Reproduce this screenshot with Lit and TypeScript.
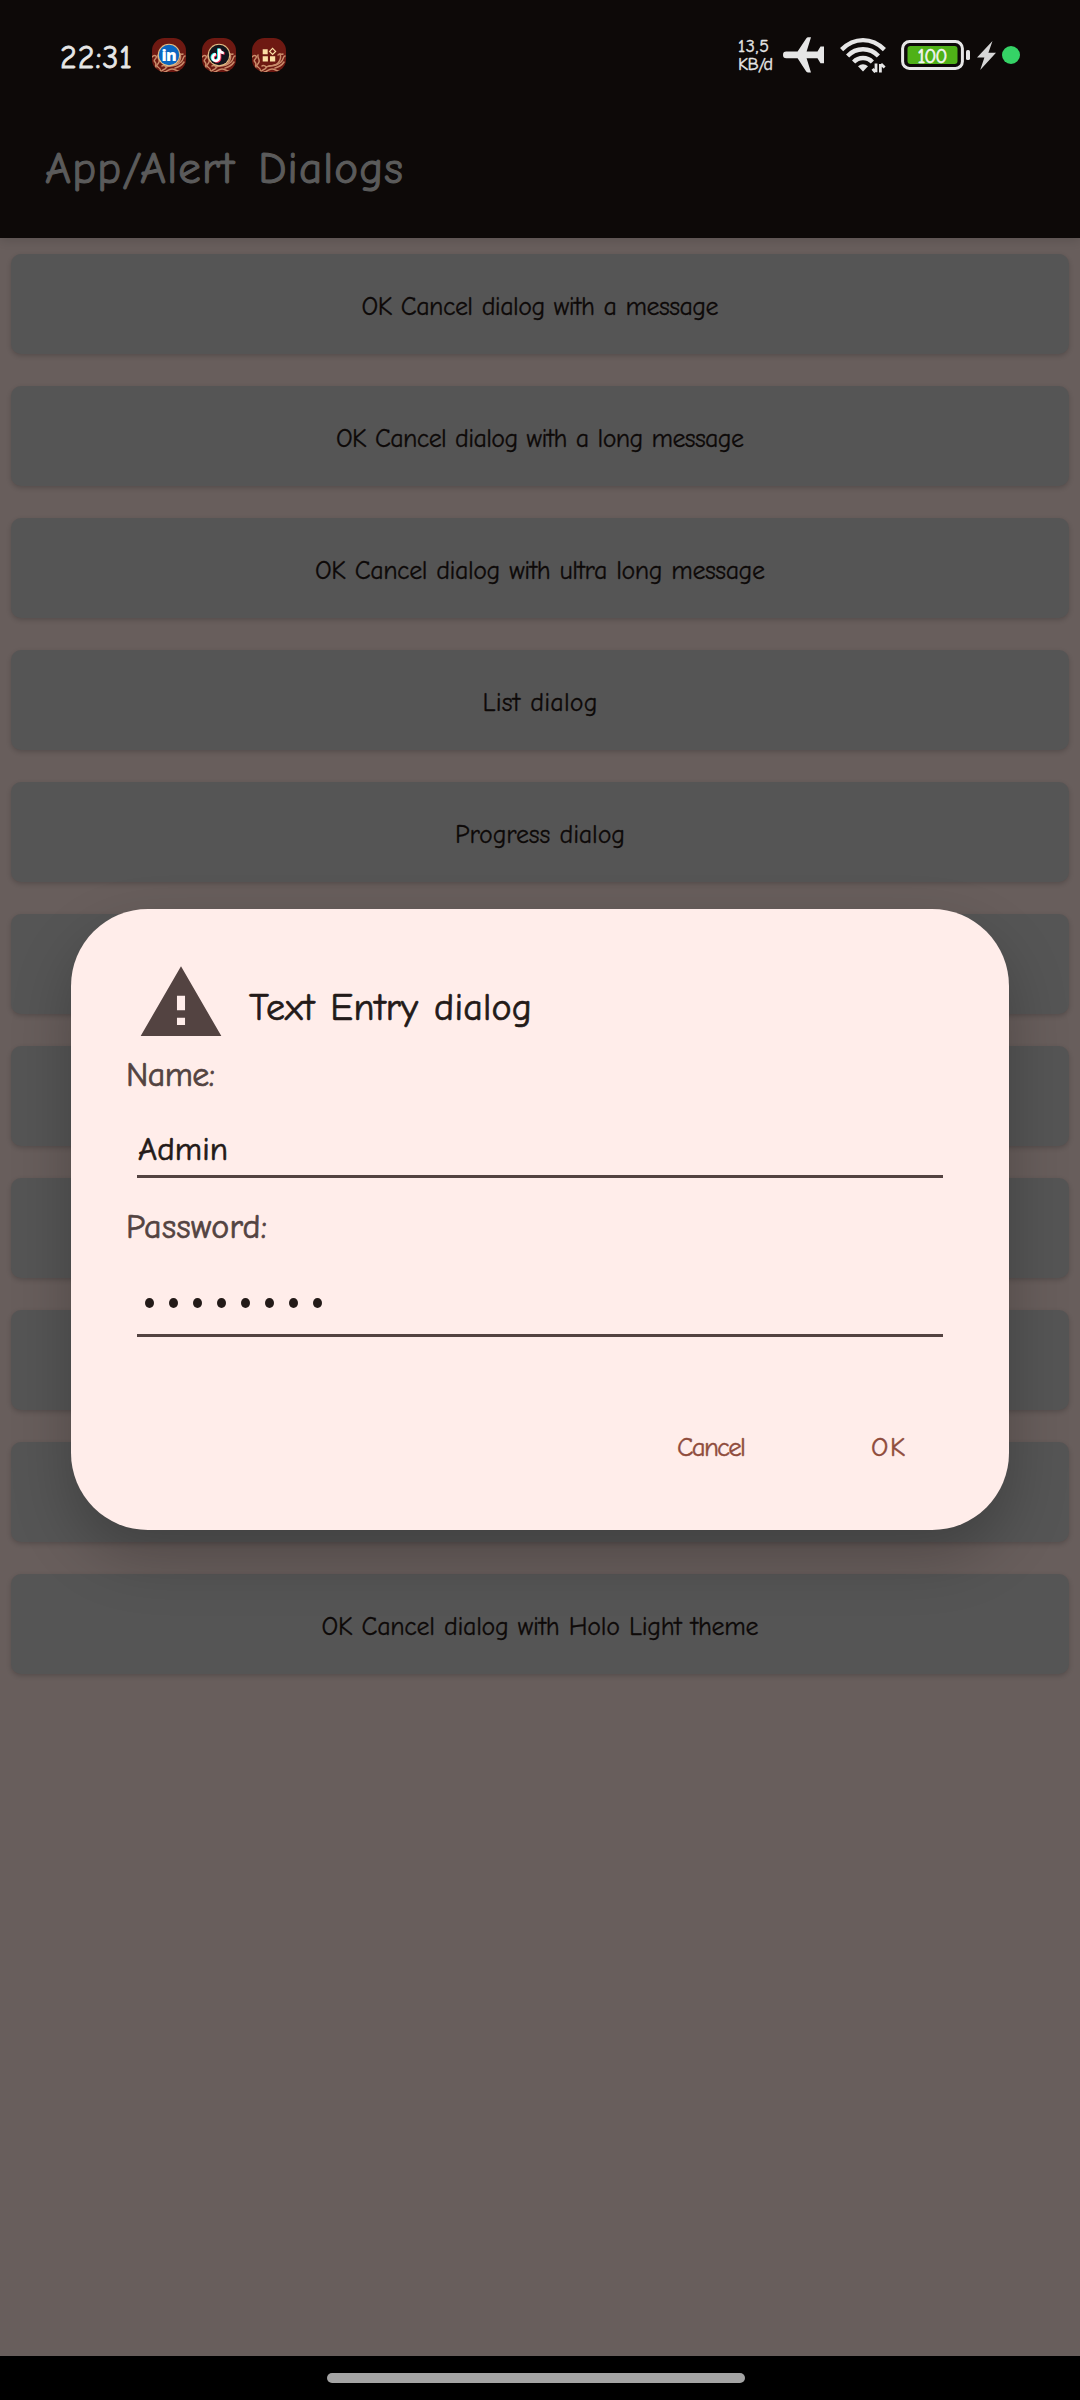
import { LitElement, html, svg, css } from "lit";
import { customElement, property } from "lit/decorators.js";

/** One line of text whose tracking is adjusted so that it spans a given width. */
@customElement("fit-text")
class FitText extends LitElement {
  @property({ type: Number }) span = 100;
  @property() text = "";

  static styles = css`
    :host { display: block; white-space: pre; flex: none; }
    .line { display: inline-block; }
  `;

  async firstUpdated() {
    await document.fonts.ready;
    const line = this.renderRoot.querySelector(".line") as HTMLElement;
    const natural = line.getBoundingClientRect().width;
    const count = this.text.length - 1;
    const spacing = (this.span - natural) / count;
    line.style.letterSpacing = `${spacing}px`;
    line.style.marginRight = `${-spacing}px`;
  }

  render() {
    return html`<span class="line">${this.text}</span>`;
  }
}

const tile = (id: string, badge: unknown) => html`
  <svg class="tile" viewBox="0 0 34 34">
    <defs><clipPath id=${id}><rect width="34" height="34" rx="12.5"></rect></clipPath></defs>
    <g clip-path="url(#${id})">
      <rect width="34" height="34" fill="#6e1912"></rect>
      <g fill="none" stroke="#c98c6b" stroke-width="1.5" stroke-linecap="round">
        <path d="M0 19c3-3 5-1 4 1s-3 2-1 4 0 3 1 5"></path>
        <path d="M6 17c-1 3 2 4 1 7s-4 3-1 5 3 3 2 5"></path>
        <path d="M9 34c1-3 4-2 5-4s-3-3-4-2M12 34c3 0 4-3 8-3s4 3 8 2"></path>
        <path d="M14 29c5-2 9-1 12-4s3-7 2-9"></path>
        <path d="M17 28c4 0 9-1 12-4s2-6 4-6"></path>
        <path d="M23 30c4-1 7-3 9-6M26 17c2-2 3 0 5-1"></path>
      </g>
      ${badge}
    </g>
  </svg>
`;

const linkedIn = svg`
  <circle cx="17" cy="17" r="11.2" fill="#e3bd86"/>
  <circle cx="17" cy="17" r="10.2" fill="#0a66c2"/>
  <text x="16.8" y="22.8" text-anchor="middle" font-family="'Open Sans', sans-serif" font-weight="800" font-size="16" letter-spacing="-0.6" fill="#fff">in</text>
`;

const notePath = "M17.2 10.8v8.8a3.3 3.3 0 1 1-3.3-3.3M17.2 10.8c.4 2.6 2.2 4 4.6 4.1";
const tikTok = svg`
  <circle cx="17" cy="17" r="11.2" fill="#e3bd86"/>
  <circle cx="17" cy="17" r="10.2" fill="#14141c"/>
  <g fill="none" stroke-width="2.5">
    <path d=${notePath} stroke="#25f4ee" transform="translate(-0.9 -0.4)"/>
    <path d=${notePath} stroke="#fe2c55" transform="translate(0.9 0.6)"/>
    <path d=${notePath} stroke="#fff"/>
  </g>
`;

const widgets = svg`
  <path d="M9 21h16v4l-6 2h-6z" fill="#6e1912"/>
  <path d="M10.7 11.3h5v5h-5zM10.7 18.3h5.2v5.3h-5.2zM18 18.3h5.2v5.3H18z" fill="#fbdfa5"/>
  <path d="M20.6 10.4l3 3-3 3-3-3z" fill="#6e1912" stroke="#fbdfa5" stroke-width="1.2"/>
`;

@customElement("status-bar")
class StatusBar extends LitElement {
  static styles = css`
    :host {
      display: flex; justify-content: space-between; align-items: center;
      height: 110px; padding: 0 60px 0 60px; box-sizing: border-box; color: #e6e6e6;
    }
    .group { display: flex; align-items: center; }
    .clock { font-size: 32px; line-height: 40px; margin: 5px 20px 0 0; -webkit-text-stroke: 0.8px; }
    .tiles { display: flex; gap: 16px; }
    .tile { width: 34px; height: 34px; display: block; }
    .rate { font-size: 18px; line-height: 18px; margin-right: 10px; padding-top: 1px; -webkit-text-stroke: 0.4px; }
    .icon { display: block; }
    .plane { margin-right: 16px; }
    .wifi { margin-right: 15px; }
    .battery { margin-right: 7px; }
    .bolt { margin-right: 6px; }
  `;

  render() {
    return html`
      <div class="group">
        <fit-text class="clock" span="72" text="22:31"></fit-text>
        <div class="tiles">
          ${tile("t1", linkedIn)} ${tile("t2", tikTok)} ${tile("t3", widgets)}
        </div>
      </div>
      <div class="group">
        <div class="rate">
          <fit-text span="31" text="13,5"></fit-text>
          <fit-text span="35" text="KB/d"></fit-text>
        </div>
        <svg class="icon plane" width="41" height="36" viewBox="0 0 41 36" fill="#e6e6e6">
          <path d="M3.3 14.6H14.6L23.2 1.4Q24 .3 25.2.3H28L23.6 14.6H34.5L37.5 9.6H41V26.2H37.5L34.5 21.2H23.6L28 35.5H25.2Q24 35.5 23.2 34.4L14.6 21.2H3.3A3.3 3.3 0 0 1 3.3 14.6Z"></path>
        </svg>
        <svg class="icon wifi" width="46" height="36" viewBox="0 0 46 36">
          <g fill="none" stroke="#e6e6e6" stroke-width="4.4">
            <path d="M1.6 12.6Q11 3.1 23 3.1T44.4 12.6"></path>
            <path d="M7.6 19Q14 12.3 23 12.3T38.4 19"></path>
            <path d="M13.6 25Q17.5 21 23 21T32.4 25"></path>
          </g>
          <path d="M18 29.2Q23 25.2 28 29.2L23 34.6Z" fill="#e6e6e6"></path>
          <path d="M36 26.5V35.2M35.4 35.2L32.6 31.8M40.4 35.5V27M41 27L44.6 30.6" stroke="#e6e6e6" stroke-width="2.8" fill="none"></path>
        </svg>
        <svg class="icon battery" width="69" height="30" viewBox="0 0 69 30">
          <rect x="1.6" y="1.6" width="59.8" height="26.8" rx="7" fill="none" stroke="#e6e6e6" stroke-width="3"></rect>
          <rect x="6.5" y="6" width="50" height="18" rx="3" fill="#4fb117"></rect>
          <rect x="65" y="10" width="4" height="10" rx="1.6" fill="#e6e6e6"></rect>
          <text x="31.5" y="22.8" text-anchor="middle" font-size="20" textLength="30" fill="#f4f4f4" stroke="#f4f4f4" stroke-width="0.6">100</text>
        </svg>
        <svg class="icon bolt" width="19" height="29" viewBox="0 0 19 29">
          <path d="M15.5 0L0 16.6H7.4L3.2 29L19 11.8H11.4Z" fill="#d6d6d6"></path>
        </svg>
        <svg class="icon" width="18" height="18" viewBox="0 0 18 18"><circle cx="9" cy="9" r="9" fill="#35d366"></circle></svg>
      </div>
    `;
  }
}

@customElement("text-entry-dialog")
class TextEntryDialog extends LitElement {
  static styles = css`
    :host {
      display: flex; flex-direction: column; box-sizing: border-box; height: 621px;
      padding: 50px 66px 0; border-radius: 77px; background: #ffedea;
      box-shadow: 0 26px 60px rgba(0, 0, 0, 0.24); color: #231a18;
    }
    .head { display: flex; align-items: center; gap: 24px; height: 88px; }
    .title {
      font-size: 38px; line-height: 44px; padding-top: 9px; word-spacing: 3px;
      -webkit-text-stroke: 0.7px;
    }
    .label { color: #534341; font-size: 34px; line-height: 40px; margin-left: -11px; -webkit-text-stroke: 0.7px; }
    .name { margin-top: 8px; }
    .password { margin-top: 29px; }
    .field { border-bottom: 3px solid #534341; }
    .text { margin-top: 34px; padding: 0 0 6px 1px; font-size: 33px; line-height: 40px; -webkit-text-stroke: 0.7px; }
    .secret { display: flex; gap: 15px; margin-top: 51px; padding: 0 0 26px 8px; }
    .dot { width: 9px; height: 10px; border-radius: 50%; background: #231a18; }
    .actions {
      display: flex; justify-content: flex-end; gap: 125px; margin: 91px 38px 0 0;
      color: #8f4c3c; font-size: 27px; line-height: 40px; -webkit-text-stroke: 0.4px;
    }
  `;

  render() {
    return html`
      <div class="head">
        <svg width="88" height="88" viewBox="0 0 24 24" fill="#534341">
          <path d="M1 21h22L12 2 1 21zm12.1-3h-2.2v-2h2.2v2zm0-4h-2.2v-4h2.2v4z"></path>
        </svg>
        <fit-text class="title" span="283" text="Text Entry dialog"></fit-text>
      </div>
      <fit-text class="label name" span="89" text="Name:"></fit-text>
      <div class="field text"><fit-text span="90" text="Admin"></fit-text></div>
      <fit-text class="label password" span="141" text="Password:"></fit-text>
      <div class="field secret">${Array.from({ length: 8 }, () => html`<span class="dot"></span>`)}</div>
      <div class="actions">
        <fit-text span="69" text="Cancel"></fit-text>
        <fit-text span="34" text="OK"></fit-text>
      </div>
    `;
  }
}

const entries: { text: string; span: number }[] = [
  { text: "OK Cancel dialog with a message", span: 357 },
  { text: "OK Cancel dialog with a long message", span: 408 },
  { text: "OK Cancel dialog with ultra long message", span: 450 },
  { text: "List dialog", span: 115 },
  { text: "Progress dialog", span: 170 },
  { text: "", span: 0 },
  { text: "", span: 0 },
  { text: "", span: 0 },
  { text: "", span: 0 },
  { text: "", span: 0 },
  { text: "OK Cancel dialog with Holo Light theme", span: 437 },
];

@customElement("app-root")
class AppRoot extends LitElement {
  static styles = css`
    :host {
      display: flex; flex-direction: column; position: relative; width: 1080px; height: 2400px;
      overflow: hidden; background: #685e5c;
      font-family: "Comic Sans MS", "Comic Neue", Lato, "Open Sans", sans-serif;
    }
    .top { height: 238px; background: #0d0908; box-shadow: 0 2px 10px rgba(0, 0, 0, 0.14); }
    .heading {
      display: flex; align-items: center; height: 128px; box-sizing: border-box;
      padding: 0 0 13px 45px; color: #5b5b5b; font-size: 45px; line-height: 56px;
      word-spacing: 7px; -webkit-text-stroke: 1.1px;
    }
    .list { flex: 1; display: flex; flex-direction: column; gap: 32px; padding: 16px 11px 0; }
    .entry {
      display: flex; align-items: center; justify-content: center; flex: none;
      height: 100px; box-sizing: border-box; padding-top: 6px; border-radius: 10px;
      background: #555; color: #0d0908; font-size: 26px; line-height: 36px; word-spacing: 1px;
      box-shadow: 0 2px 5px rgba(0, 0, 0, 0.18); -webkit-text-stroke: 0.3px;
    }
    .gesture { display: flex; align-items: center; justify-content: center; height: 44px; background: #000; }
    .pill { width: 418px; height: 10px; margin: 0 0 0 -8px; border-radius: 5px; background: #a4a4a4; }
    .overlay { position: absolute; inset: 0; padding: 909px 71px 0; }
  `;

  render() {
    return html`
      <header class="top">
        <status-bar></status-bar>
        <div class="heading"><fit-text span="358" text="App/Alert Dialogs"></fit-text></div>
      </header>
      <main class="list">
        ${entries.map(
          (e) => html`<div class="entry">
            ${e.text ? html`<fit-text span=${e.span} text=${e.text}></fit-text>` : null}
          </div>`,
        )}
      </main>
      <footer class="gesture"><div class="pill"></div></footer>
      <div class="overlay"><text-entry-dialog></text-entry-dialog></div>
    `;
  }
}
